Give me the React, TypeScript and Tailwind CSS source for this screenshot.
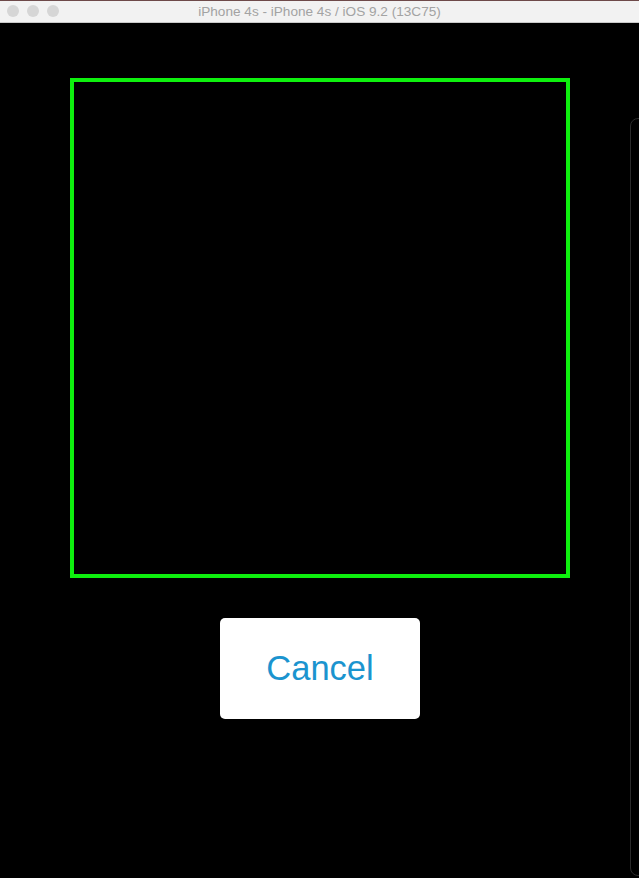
const TitleBar = () => {
  return (
    <div className="relative flex h-[23px] items-center justify-center border-t border-t-[#6e4a4a] border-b border-b-[#c9c9c9] bg-[#f2f2f2]">
      <div className="absolute left-[7px] top-[4px] flex gap-[8px]">
        <span className="h-[12px] w-[12px] rounded-full bg-[#d6d6d6]" />
        <span className="h-[12px] w-[12px] rounded-full bg-[#d6d6d6]" />
        <span className="h-[12px] w-[12px] rounded-full bg-[#d6d6d6]" />
      </div>
      <span className="text-[13.6px] leading-none text-[#a3a3a3]">
        iPhone 4s - iPhone 4s / iOS 9.2 (13C75)
      </span>
    </div>
  );
};

export default function App() {
  return (
    <div
      className="relative h-[878px] w-[639px] overflow-hidden bg-black"
      style={{ fontFamily: '"Liberation Sans", Arial, sans-serif' }}
    >
      <TitleBar />
      <div className="flex flex-col items-center pl-[1px]">
        <div className="mt-[55px] h-[500px] w-[500px] border-4 border-[#0ef00e]" />
        <button className="mt-[40px] flex h-[101px] w-[200px] items-center justify-center rounded-[5px] bg-white">
          <span className="text-[34.5px] text-[#1b94cf]">Cancel</span>
        </button>
      </div>
      {/* scroller outline */}
      <div className="absolute left-[630px] top-[118px] h-[758px] w-[20px] rounded-[8px] border border-[#2b2b2b]" />
    </div>
  );
}
